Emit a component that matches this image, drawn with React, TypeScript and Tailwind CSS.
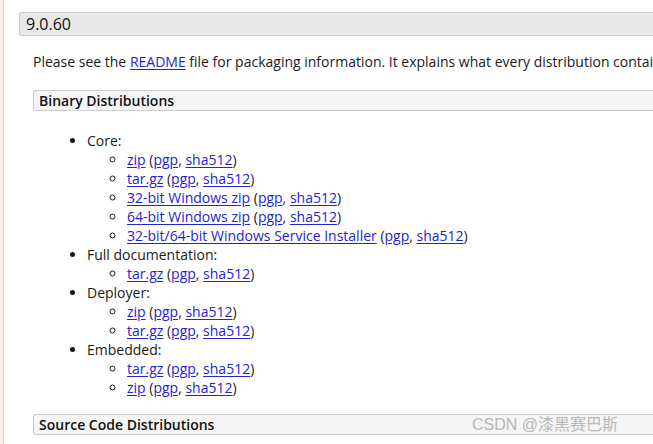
import React from "react";

const core = [
  "zip",
  "tar.gz",
  "32-bit Windows zip",
  "64-bit Windows zip",
  "32-bit/64-bit Windows Service Installer",
];

const groups: { title: string; files: string[] }[] = [
  { title: "Core:", files: core },
  { title: "Full documentation:", files: ["tar.gz"] },
  { title: "Deployer:", files: ["zip", "tar.gz"] },
  { title: "Embedded:", files: ["tar.gz", "zip"] },
];

function A({ children }: { children: React.ReactNode }) {
  return (
    <a href="#" className="text-[#2424d6] underline underline-offset-2">
      {children}
    </a>
  );
}

function FileRow({ name }: { name: string }) {
  return (
    <li className="list-[circle]">
      <A>{name}</A> (<A>pgp</A>, <A>sha512</A>)
    </li>
  );
}

export default function App() {
  return (
    <div
      className="relative flex h-[444px] w-[653px] overflow-hidden bg-white text-[14px] leading-[19px] text-[#1a1a1a]"
      style={{ fontFamily: '"Open Sans", "Noto Sans", sans-serif' }}
    >
      <div className="w-[4px] shrink-0 border-r border-[#d8d0c4] bg-[#f7f0e6]" />
      <div className="min-w-[800px] pl-[15px] pt-[12px]">
        <h3 className="flex h-[24px] items-center rounded-l-[3px] border border-r-0 border-[#cccccc] bg-[#e8e8e8] pl-[6px] text-[16px] font-medium text-[#111]">
          9.0.60
        </h3>
        <div className="pl-[14px]">
          <p className="mt-[16px] whitespace-nowrap">
            Please see the <A>README</A> file for packaging information. It explains what every
            distribution contains.
          </p>
          <h4 className="mt-[19px] flex h-[21px] items-center rounded-l-[3px] border border-r-0 border-[#cccccc] bg-[#f5f5f5] pl-[5px] font-semibold text-[#111]">
            Binary Distributions
          </h4>
          <ul className="mt-[20px] list-disc pl-[54px]">
            {groups.map((g) => (
              <li key={g.title}>
                {g.title}
                <ul className="pl-[40px]">
                  {g.files.map((f, i) => (
                    <FileRow key={i} name={f} />
                  ))}
                </ul>
              </li>
            ))}
          </ul>
          <h4 className="mt-[17px] flex h-[21px] items-center rounded-l-[3px] border border-r-0 border-[#cccccc] bg-[#f5f5f5] pl-[5px] font-semibold text-[#111]">
            Source Code Distributions
          </h4>
        </div>
      </div>
      <div
        className="pointer-events-none absolute left-[472px] top-[415px] text-[16px] leading-[20px] text-[#b8b8b8]"
        style={{ fontFamily: '"Liberation Sans", "Noto Sans CJK SC", sans-serif' }}
      >
        CSDN @漆黑赛巴斯
      </div>
    </div>
  );
}
